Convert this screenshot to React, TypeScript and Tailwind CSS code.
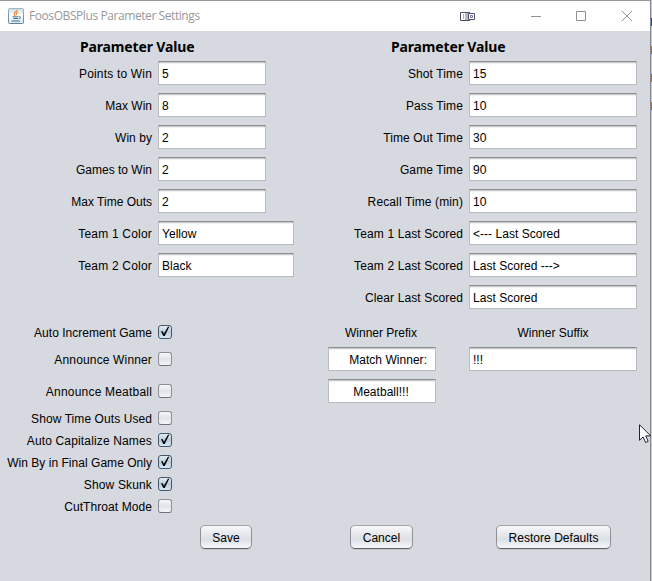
import React from "react";

const topFieldsLeft = [
  { label: "Points to Win", value: "5", width: "w-[108px]", tracking: "tracking-[0.18px]" },
  { label: "Max Win", value: "8", width: "w-[108px]", tracking: "tracking-[0px]" },
  { label: "Win by", value: "2", width: "w-[108px]", tracking: "tracking-[0.05px]" },
  { label: "Games to Win", value: "2", width: "w-[108px]", tracking: "tracking-[0px]" },
  { label: "Max Time Outs", value: "2", width: "w-[108px]", tracking: "tracking-[0px]" },
  { label: "Team 1 Color", value: "Yellow", width: "w-[136px]", tracking: "tracking-[0.2px]" },
  { label: "Team 2 Color", value: "Black", width: "w-[136px]", tracking: "tracking-[0.2px]" },
];

const topFieldsRight = [
  { label: "Shot Time", value: "15" },
  { label: "Pass Time", value: "10" },
  { label: "Time Out Time", value: "30" },
  { label: "Game Time", value: "90" },
  { label: "Recall Time (min)", value: "10" },
  { label: "Team 1 Last Scored", value: "<--- Last Scored" },
  { label: "Team 2 Last Scored", value: "Last Scored --->" },
  { label: "Clear Last Scored", value: "Last Scored" },
];

const options = [
  { label: "Auto Increment Game", checked: true, height: "h-[22px]", tracking: "tracking-[0.03px]" },
  { label: "Announce Winner", checked: false, height: "h-8", tracking: "tracking-[0.15px]" },
  { label: "Announce Meatball", checked: false, height: "h-8", tracking: "tracking-[0.2px]" },
  { label: "Show Time Outs Used", checked: false, height: "h-[22px]", tracking: "tracking-[0.08px]" },
  { label: "Auto Capitalize Names", checked: true, height: "h-[22px]", tracking: "tracking-[0.15px]" },
  { label: "Win By in Final Game Only", checked: true, height: "h-[22px]", tracking: "tracking-[0.03px]" },
  { label: "Show Skunk", checked: true, height: "h-[22px]", tracking: "tracking-[0.15px]" },
  { label: "CutThroat Mode", checked: false, height: "h-[22px]", tracking: "tracking-[0.08px]" },
];

function Field({ value, className = "" }: { value: string; className?: string }) {
  return (
    <div
      className={`flex h-6 shrink-0 items-center whitespace-pre border border-[#b9bbbe] border-t-[#8b8d91] bg-white px-[3px] pt-px tracking-[0.03px] shadow-[inset_0_1px_0_#c9cacc,inset_0_2px_0_#f0f0f0] ${className}`}
    >
      {value}
    </div>
  );
}

function Heading({ className }: { className: string }) {
  return (
    <h2
      className={`h-[30px] pt-[7px] text-[14px] leading-[18px] font-bold tracking-[-0.15px] whitespace-nowrap [font-family:'Noto_Sans','Open_Sans',sans-serif] ${className}`}
    >
      Parameter Value
    </h2>
  );
}

function Checkbox({ checked }: { checked: boolean }) {
  return (
    <div
      className={`relative size-3.5 shrink-0 rounded-[3px] border ${
        checked
          ? "border-[#435569] bg-linear-to-b from-[#e5edf5] via-[#b9cbdc] to-[#d8e8f6]"
          : "border-[#8c8e94] border-b-[#6f7177] bg-linear-to-b from-[#f7f8fa] via-[#dfe2e7] to-[#f4f6fa]"
      }`}
    >
      {checked && (
        <svg className="absolute -top-px -left-px" width="14" height="14" viewBox="0 0 14 14">
          <path d="M3 6.400 4.600 6 5.900 8.700 9.900 1.700 11.400 1.500 6.700 11H5.300Z" fill="#000" />
        </svg>
      )}
    </div>
  );
}

function Button({ children, className }: { children: React.ReactNode; className: string }) {
  return (
    <button
      className={`flex h-6 items-center justify-center rounded-[5px] border border-[#8f9196] border-t-[#a4a6aa] border-b-[#5c5e63] bg-linear-to-b from-[#f8f8fa] via-[#dcdfe4] via-60% to-[#f5f7fc] pt-px tracking-[0.03px] whitespace-nowrap shadow-[0_1px_0_#c3c6cc] ${className}`}
    >
      {children}
    </button>
  );
}

function JavaIcon() {
  return (
    <svg width="16" height="16" viewBox="0 0 16 16" fill="none">
      <defs>
        <linearGradient id="tile" x2="0" y2="1">
          <stop stopColor="#9fb5c4" />
          <stop offset="1" stopColor="#5c7f95" />
        </linearGradient>
        <linearGradient id="face" x2="0" y2="1">
          <stop stopColor="#c7d9e5" />
          <stop offset=".45" stopColor="#fff" />
          <stop offset="1" stopColor="#d8e5ed" />
        </linearGradient>
      </defs>
      <rect x=".5" y=".5" width="15" height="15" rx="1" fill="url(#face)" stroke="url(#tile)" />
      <path d="M9 2C9 4 5.800 4.200 6.200 6.200c.1.7.9 1 1 1.800M10.200 4.300C8.500 5 7.700 5.600 8.500 7" stroke="#ef8128" strokeWidth="1.1" />
      <path d="M4.500 8.800h6M5.300 10.500h5M3.500 13h8.300M11 8.800c2.200-.5 2 1.600.2 2" stroke="#426f8e" strokeWidth="1" />
    </svg>
  );
}

function TitleBar() {
  return (
    <header className="flex h-[30px] shrink-0 items-center bg-white pl-2">
      <JavaIcon />
      <span className="ml-[5px] w-[430px] text-[12px] tracking-[-0.42px] text-[#999] [font-family:'Open_Sans','Noto_Sans',sans-serif]">
        FoosOBSPlus Parameter Settings
      </span>
      <svg width="17" height="11" viewBox="0 0 17 11" fill="none" className="shrink-0">
        <path d="M11 1.500H1.500v8H11" stroke="#4d506a" />
        <path d="M4 3h1v5H4zM6 2h3v7H6z" fill="#b7b8c2" />
        <path d="M9.500 2.500h6v6h-6z" stroke="#4d506a" />
        <path d="M11.500 4.500h2v2h-2z" stroke="#777a8c" />
      </svg>
      <svg width="104" height="12" viewBox="0 0 104 12" fill="none" stroke="#929292" className="ml-[55px] shrink-0">
        <path d="M0 6.500h10M45.500 1.500h9v9h-9z" />
        <path d="m91 1 10 10M101 1l-10 10" />
      </svg>
    </header>
  );
}

export default function App() {
  return (
    <div className="relative flex h-[581px] w-[652px] overflow-hidden bg-[#d0d0d4] [font-family:'Liberation_Sans',Arial,sans-serif] text-[12px] leading-[14px] tracking-[0.12px] text-black">
      <div className="flex w-[650px] flex-col border-t border-[#96969a] bg-[#d6d9df]">
        <TitleBar />
        <main className="flex flex-col">
          <div className="flex h-[290px]">
            <section className="w-[328px]">
              <Heading className="pl-[80px]" />
              <div className="flex flex-col gap-2">
                {topFieldsLeft.map((f) => (
                  <div key={f.label} className="flex h-6 items-center gap-1.5">
                    <span className={`w-[152px] pt-px text-right whitespace-nowrap ${f.tracking}`}>{f.label}</span>
                    <Field value={f.value} className={f.width} />
                  </div>
                ))}
              </div>
            </section>
            <section className="w-[322px]">
              <Heading className="pl-[63px]" />
              <div className="flex flex-col gap-2">
                {topFieldsRight.map((f) => (
                  <div key={f.label} className="flex h-6 items-center gap-1.5">
                    <span className="w-[135px] pt-px text-right whitespace-nowrap">{f.label}</span>
                    <Field value={f.value} className="w-[168px]" />
                  </div>
                ))}
              </div>
            </section>
          </div>
          <div className="flex h-[204px]">
            <section className="w-[328px]">
              {options.map((o) => (
                <div key={o.label} className={`flex items-center gap-1.5 ${o.height}`}>
                  <span className={`w-[152px] pt-px text-right whitespace-nowrap ${o.tracking}`}>{o.label}</span>
                  <Checkbox checked={o.checked} />
                </div>
              ))}
            </section>
            <section className="flex gap-[33px]">
              <div className="flex w-[108px] flex-col gap-[7px]">
                <div className="flex h-[19px] items-end justify-center pr-[2px] tracking-[0px]">Winner Prefix</div>
                <Field value="Match Winner:" className="justify-end pr-2" />
                <Field value="Meatball!!!" className="mt-px justify-center pr-[5px]" />
              </div>
              <div className="flex w-[168px] flex-col gap-[7px]">
                <div className="flex h-[19px] items-end justify-center tracking-[0px]">Winner Suffix</div>
                <Field value="!!!" />
              </div>
            </section>
          </div>
          <div className="flex pl-[200px]">
            <Button className="w-[52px]">Save</Button>
            <Button className="ml-[98px] w-[63px]">Cancel</Button>
            <Button className="ml-[83px] w-[115px]">Restore Defaults</Button>
          </div>
        </main>
      </div>
      <div className="flex w-0.5 flex-col border-l border-[#85868c] bg-[#cbccd2]">
        <div className="mt-[18px] h-2 bg-[#33447a]" />
        <div className="mt-5 h-2 bg-[#8c7a45]" />
        <div className="mt-5 h-2 bg-[#8c7a45]" />
        <div className="mt-5 h-2 bg-[#8c7a45]" />
      </div>
      <svg className="absolute top-[424px] left-[639px]" width="13" height="20" viewBox="0 0 13 20">
        <path d="M.5.7v15.600l3.600-3.400 2.500 5.600 2.600-1.100-2.500-5.500h5Z" fill="#fff" stroke="#202333" />
      </svg>
    </div>
  );
}
